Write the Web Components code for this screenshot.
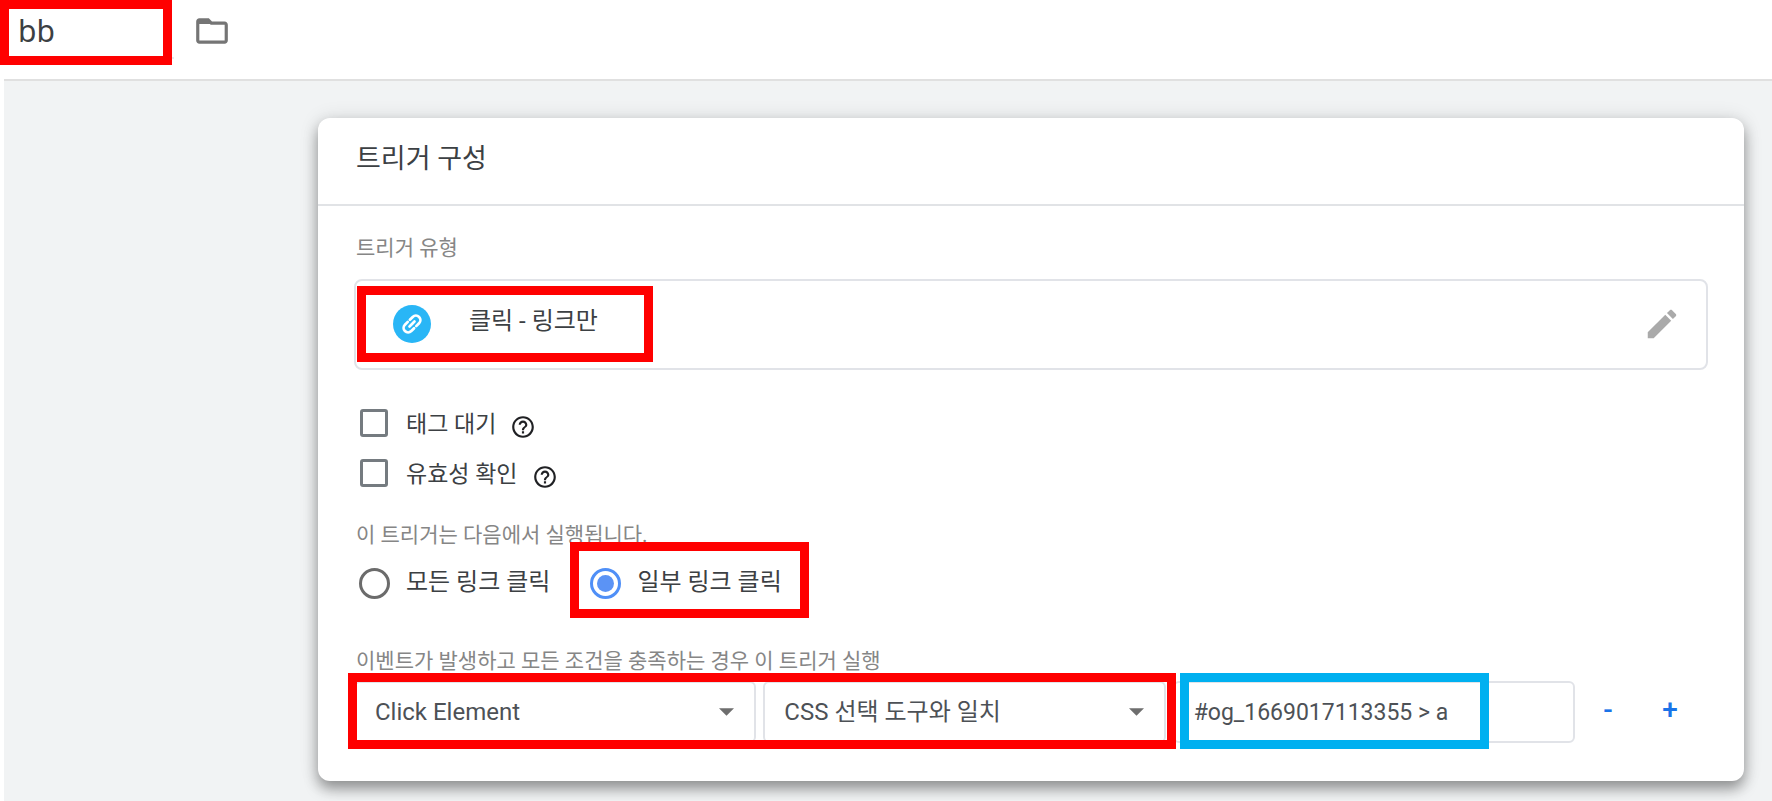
<!DOCTYPE html>
<html lang="ko">
<head>
<meta charset="utf-8">
<meta name="viewport" content="width=device-width, initial-scale=1">
<title>트리거 구성</title>
<style>
  body {
    margin: 0;
    background: #fff;
    color: #3c4043;
    font-family: Roboto, "Noto Sans CJK KR", sans-serif;
    font-size: 24px;
  }
</style>
</head>
<body>
<trigger-editor></trigger-editor>

<script>
const define = (name, html, setup) => {
  const template = document.createElement('template');
  template.innerHTML = html;
  customElements.define(name, class extends HTMLElement {
    connectedCallback() {
      if (this.shadowRoot) return;
      this.attachShadow({mode: 'open'}).append(template.content.cloneNode(true));
      if (setup) setup(this, this.shadowRoot);
    }
  });
};

// coloured frame drawn over whatever is slotted in
define('mark-frame', /*html*/`
  <style>
    :host { display: block; position: relative; z-index: 1; }
    :host::after {
      content: "";
      position: absolute;
      inset: var(--frame-inset, 0);
      border: 9px solid var(--frame-color, #f00);
      pointer-events: none;
    }
  </style>
  <slot></slot>
`);

define('editor-header', /*html*/`
  <style>
    :host {
      display: flex;
      align-items: flex-start;
      height: 79px;
      margin-left: 4px;
      border-bottom: 2px solid #e0e0e0;
    }
    mark-frame { width: 170px; --frame-inset: 0 2px -6px -4px; }
    input {
      box-sizing: border-box;
      display: block;
      width: 100%;
      height: 59px;
      padding: 4px 14px 0;
      border: 0;
      border-bottom: 2px solid #e8eaed;
      background: none;
      color: #3c4043;
      font: 30px "Noto Sans", sans-serif;
      outline: 0;
    }
    button {
      margin: 12px 0 0 19px;
      padding: 0;
      border: 0;
      background: none;
    }
    svg { display: block; }
  </style>
  <mark-frame><input aria-label="트리거 이름" value="bb"></mark-frame>
  <button aria-label="폴더">
    <svg width="38" height="38" viewBox="0 0 24 24" fill="#757575"><path d="M9.170 6l2 2H20v10H4V6h5.170M10 4H4c-1.100 0-1.990.9-1.990 2L2 18c0 1.100.9 2 2 2h16c1.100 0 2-.9 2-2V8c0-1.100-.9-2-2-2h-8l-2-2z"/><path d="M3 5h7l2 2.500H3z"/></svg>
  </button>
`);

define('editor-card', /*html*/`
  <style>
    :host {
      display: block;
      border-radius: 12px;
      background: #fff;
      box-shadow: 0 8px 14px rgba(0, 0, 0, .36), 0 1px 20px rgba(0, 0, 0, .12);
    }
    header {
      padding: 22px 38px 26px;
      border-bottom: 2px solid #e1e3e6;
    }
    h2 { margin: 0; font-size: 27px; line-height: 38px; font-weight: 400; }
    .body { padding: 27px 36px 38px; }
  </style>
  <header><h2><slot name="title"></slot></h2></header>
  <div class="body"><slot></slot></div>
`);

define('field-label', /*html*/`
  <style>
    :host {
      display: block;
      padding-left: 2px;
      color: #868686;
      font-size: 21px;
      line-height: 30px;
    }
  </style>
  <slot></slot>
`);

define('trigger-type', /*html*/`
  <style>
    :host {
      box-sizing: border-box;
      display: flex;
      align-items: center;
      justify-content: space-between;
      height: 91px;
      padding: 0 25px 2px 0;
      border: 2px solid #e1e3e8;
      border-radius: 8px;
    }
    mark-frame { --frame-inset: 0; margin-left: 1px; }
    .type {
      box-sizing: border-box;
      display: flex;
      align-items: center;
      gap: 38px;
      width: 296px;
      height: 76px;
      padding-left: 36px;
    }
    .name { line-height: 30px; padding-bottom: 6px; }
    button { padding: 0; border: 0; background: none; }
    svg { display: block; }
  </style>
  <mark-frame>
    <div class="type">
      <svg width="38" height="38" viewBox="0 0 38 38">
        <circle cx="19" cy="19" r="19" fill="#29b6f6"/>
        <g transform="rotate(-45 19 19)" fill="none" stroke="#fff" stroke-width="2.700" stroke-linecap="round">
          <path d="M17.500 14.500H13.500a4.500 4.500 0 0 0 0 9H17.500"/>
          <path d="M20.500 14.500H24.500a4.500 4.500 0 0 1 0 9H20.500"/>
          <path d="M15.500 19H22.500"/>
        </g>
      </svg>
      <span class="name"><slot></slot></span>
    </div>
  </mark-frame>
  <button aria-label="수정">
    <svg width="38" height="38" viewBox="0 0 24 24" fill="#aaa"><path d="M3 17.250V21h3.750L17.810 9.940l-3.750-3.750L3 17.250zM20.710 7.040c.39-.39.39-1.020 0-1.410l-2.340-2.340c-.39-.39-1.020-.39-1.410 0l-1.830 1.830 3.750 3.750 1.830-1.830z"/></svg>
  </button>
`);

define('check-row', /*html*/`
  <style>
    :host { display: flex; align-items: center; gap: 14px; height: 50px; padding-left: 6px; font-size: 23px; }
    label { display: flex; align-items: center; gap: 18px; line-height: 30px; }
    span { padding-top: 4px; }
    input {
      appearance: none;
      box-sizing: border-box;
      width: 28px;
      height: 28px;
      margin: 0;
      border: 3px solid #757b80;
      border-radius: 3px;
    }
    button { padding: 8px 0 0; border: 0; background: none; }
    svg { display: block; }
  </style>
  <label><input type="checkbox"><span><slot></slot></span></label>
  <button aria-label="도움말">
    <svg width="26" height="26" viewBox="0 0 24 24" fill="#202124"><path d="M11 18h2v-2h-2v2zm1-16C6.480 2 2 6.480 2 12s4.480 10 10 10 10-4.480 10-10S17.520 2 12 2zm0 18c-4.410 0-8-3.590-8-8s3.590-8 8-8 8 3.590 8 8-3.590 8-8 8zm0-14c-2.210 0-4 1.790-4 4h2c0-1.100.9-2 2-2s2 .9 2 2c0 2-3 1.750-3 5h2c0-2.250 3-2.500 3-5 0-2.210-1.790-4-4-4z"/></svg>
  </button>
`);

define('radio-option', /*html*/`
  <style>
    :host { display: block; }
    label { display: flex; align-items: center; gap: 16px; height: 40px; line-height: 30px; }
    input {
      appearance: none;
      box-sizing: border-box;
      display: grid;
      place-content: center;
      width: 31px;
      height: 31px;
      margin: 0;
      border: 3px solid #6b6b6b;
      border-radius: 50%;
    }
    input:checked { border-color: #4f8ff7; }
    input:checked::before {
      content: "";
      width: 17px;
      height: 17px;
      border-radius: 50%;
      background: #5b93f5;
    }
    span { padding-bottom: 2px; }
  </style>
  <label><input type="radio"><span><slot></slot></span></label>
`, (host, root) => {
  root.querySelector('input').checked = host.hasAttribute('checked');
});

define('select-field', /*html*/`
  <style>
    :host { display: grid; align-items: center; }
    select, svg { grid-area: 1 / 1; }
    select {
      appearance: none;
      box-sizing: border-box;
      width: 100%;
      height: 62px;
      padding: 0 40px 0 19px;
      border: 2px solid #e1e3e8;
      border-radius: 6px;
      background: #fff;
      color: #4d5156;
      font: inherit;
    }
    svg { justify-self: end; margin-right: 22px; pointer-events: none; z-index: 1; }
  </style>
  <select><option></option></select>
  <svg width="15" height="8" viewBox="0 0 14 7" fill="#6e6e6e"><path d="M0 0h14L7 7z"/></svg>
`, (host, root) => {
  root.querySelector('select').setAttribute('aria-label', host.getAttribute('label'));
  root.querySelector('option').textContent = host.getAttribute('value');
});

define('condition-row', /*html*/`
  <style>
    :host { display: flex; align-items: center; }
    .fields { flex: 1; display: grid; grid-template-columns: repeat(3, 1fr); gap: 7px; }
    .selects { grid-column: span 2; z-index: 2; --frame-inset: -8px -10px -6px -6px; }
    .pair { display: grid; grid-template-columns: 1fr 1fr; gap: 7px; }
    .value { --frame-inset: -8px 86px -6px 7px; --frame-color: #00b0f0; }
    input {
      box-sizing: border-box;
      display: block;
      width: 100%;
      height: 62px;
      padding: 0 19px;
      border: 2px solid #e1e3e8;
      border-radius: 6px;
      color: #4d5156;
      font: inherit;
      font-size: 23px;
      outline: 0;
    }
    .actions { display: flex; margin: 0 7px 0 2px; }
    button {
      width: 62px;
      padding: 0 0 4px;
      border: 0;
      background: none;
      color: #1a73e8;
      font: 500 28px/40px Roboto, sans-serif;
    }
  </style>
  <div class="fields">
    <mark-frame class="selects">
      <div class="pair">
        <select-field label="변수" value="Click Element"></select-field>
        <select-field label="연산자" value="CSS 선택 도구와 일치"></select-field>
      </div>
    </mark-frame>
    <mark-frame class="value"><input aria-label="값" value="#og_1669017113355 &gt; a"></mark-frame>
  </div>
  <div class="actions">
    <button aria-label="조건 삭제">-</button>
    <button aria-label="조건 추가">+</button>
  </div>
`);

define('trigger-editor', /*html*/`
  <style>
    :host { display: flex; flex-direction: column; min-height: 100vh; }
    main {
      flex: 1;
      margin-left: 4px;
      padding: 37px 28px 20px 314px;
      background: #f1f3f4;
    }
    trigger-type { margin-top: 16px; }
    .checks { margin: 28px 0 22px; }
    .radios { display: flex; gap: 40px; margin: 13px 0 43px; padding-left: 5px; }
    .radios mark-frame { --frame-inset: -21px -27px -15px -20px; }
    condition-row { margin-top: 5px; }
  </style>
  <editor-header></editor-header>
  <main>
    <editor-card>
      <span slot="title">트리거 구성</span>
      <field-label>트리거 유형</field-label>
      <trigger-type>클릭 - 링크만</trigger-type>
      <div class="checks">
        <check-row>태그 대기</check-row>
        <check-row>유효성 확인</check-row>
      </div>
      <field-label>이 트리거는 다음에서 실행됩니다.</field-label>
      <div class="radios">
        <radio-option>모든 링크 클릭</radio-option>
        <mark-frame><radio-option checked>일부 링크 클릭</radio-option></mark-frame>
      </div>
      <field-label>이벤트가 발생하고 모든 조건을 충족하는 경우 이 트리거 실행</field-label>
      <condition-row></condition-row>
    </editor-card>
  </main>
`);
</script>
</body>
</html>
